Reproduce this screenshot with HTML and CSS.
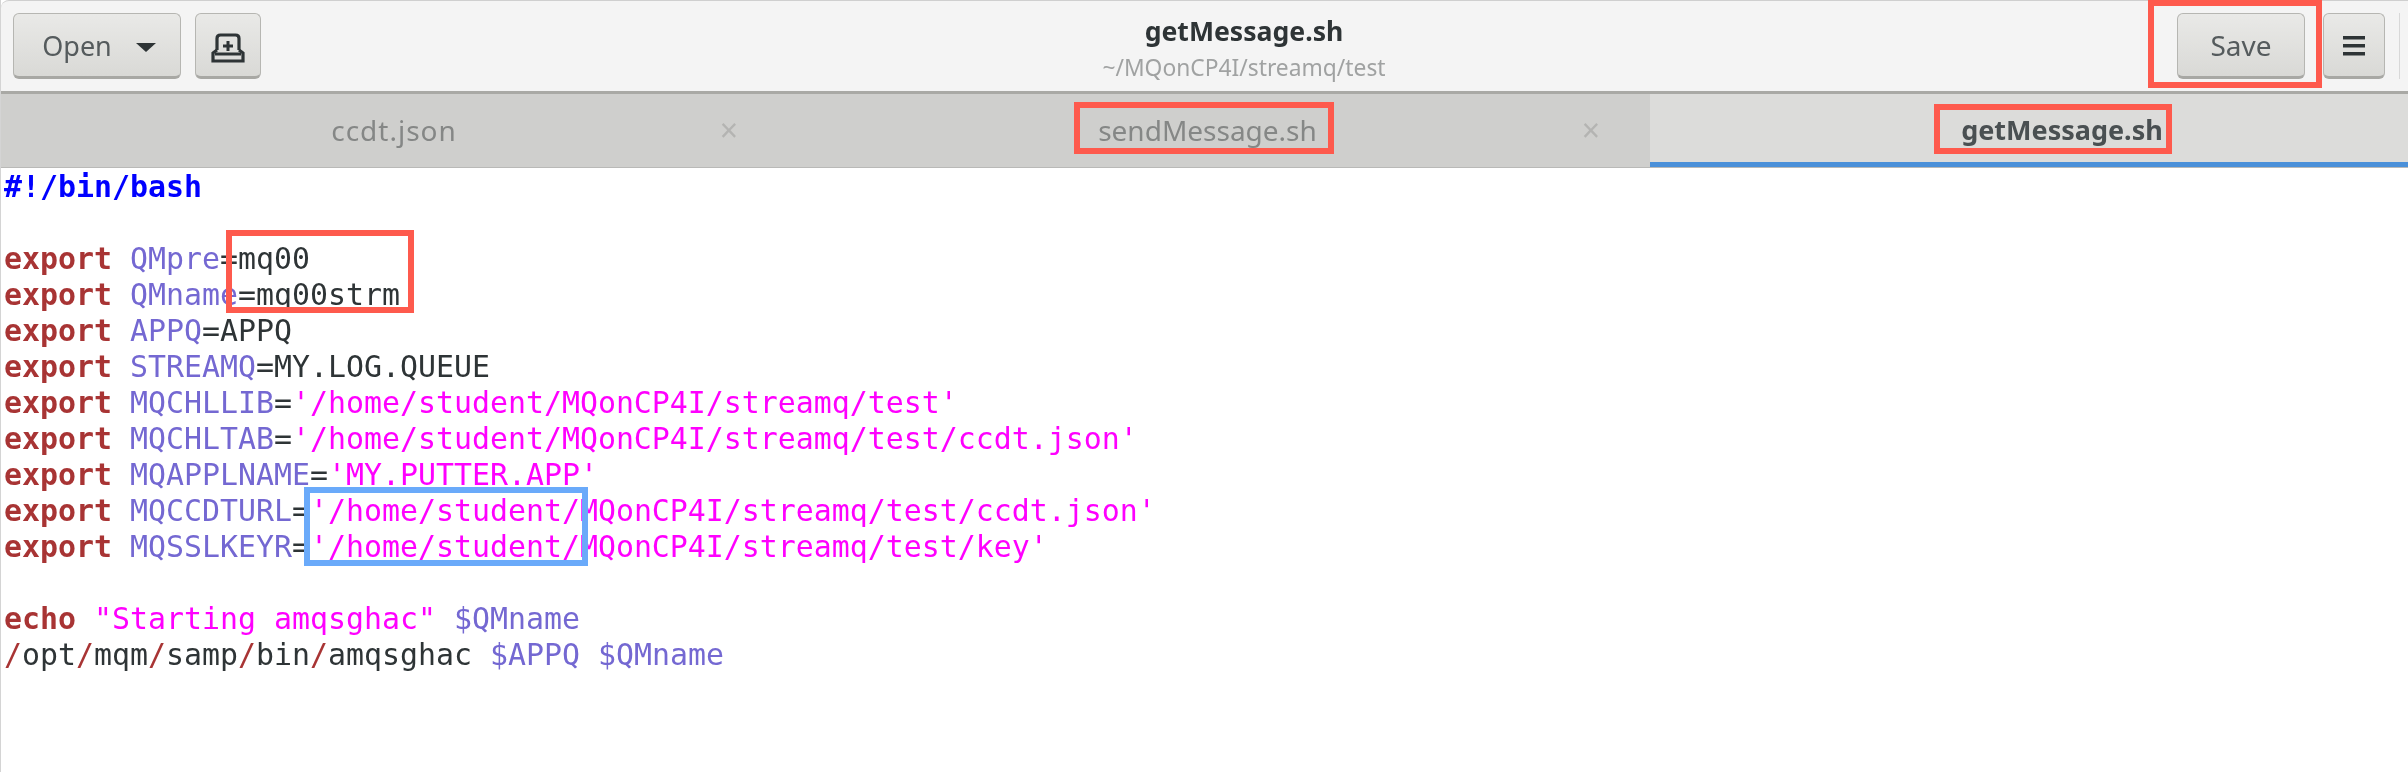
FILE: index.html
```html
<!DOCTYPE html>
<html lang="en">
<head>
<meta charset="utf-8">
<title>getMessage.sh</title>
<link rel="stylesheet" href="styles.css">
</head>
<body>
<div class="window">
  <header class="headerbar">
    <div class="group group-left">
      <button class="btn btn-open"><span>Open</span><i class="caret"></i></button>
      <button class="btn btn-icon btn-recent">
        <svg width="34" height="30" viewBox="0 0 34 30" fill="none" stroke="#2e3436" stroke-width="3.2">
          <path d="M6 17V5.500Q6 2 9.500 2H24.500Q28 2 28 5.500V17"/>
          <path d="M6 17L2 20V28H32V20L28 17"/>
          <path d="M4 21H30" stroke-width="3"/>
          <path d="M17 8V18M12 13H22" stroke-width="3"/>
        </svg>
      </button>
    </div>
    <div class="title">
      <div class="title-main">getMessage.sh</div>
      <div class="title-sub">~/MQonCP4I/streamq/test</div>
    </div>
    <div class="group group-right">
      <button class="btn btn-save">Save</button>
      <button class="btn btn-icon btn-menu">
        <svg width="22" height="20" viewBox="0 0 22 20" fill="#2e3436"><rect y="0" width="22" height="3.500"/><rect y="8" width="22" height="3.500"/><rect y="16" width="22" height="3.500"/></svg>
      </button>
      <div class="sep"></div>
    </div>
  </header>
  <nav class="tabs">
    <div class="tab tab-1"><span class="tab-label">ccdt.json</span><span class="tab-close">×</span></div>
    <div class="tab tab-2"><span class="tab-label">sendMessage.sh</span><span class="tab-close">×</span></div>
    <div class="tab tab-3 active"><span class="tab-label">getMessage.sh</span></div>
  </nav>
  <pre class="editor"><span class="sb">#!/bin/bash</span>

<span class="kw">export</span> <span class="var">QMpre</span>=mq00
<span class="kw">export</span> <span class="var">QMname</span>=mq00strm
<span class="kw">export</span> <span class="var">APPQ</span>=APPQ
<span class="kw">export</span> <span class="var">STREAMQ</span>=MY.LOG.QUEUE
<span class="kw">export</span> <span class="var">MQCHLLIB</span>=<span class="str">'/home/student/MQonCP4I/streamq/test'</span>
<span class="kw">export</span> <span class="var">MQCHLTAB</span>=<span class="str">'/home/student/MQonCP4I/streamq/test/ccdt.json'</span>
<span class="kw">export</span> <span class="var">MQAPPLNAME</span>=<span class="str">'MY.PUTTER.APP'</span>
<span class="kw">export</span> <span class="var">MQCCDTURL</span>=<span class="str">'/home/student/MQonCP4I/streamq/test/ccdt.json'</span>
<span class="kw">export</span> <span class="var">MQSSLKEYR</span>=<span class="str">'/home/student/MQonCP4I/streamq/test/key'</span>

<span class="kw">echo</span> <span class="str">"Starting amqsghac"</span> <span class="var">$QMname</span>
<span class="sl">/</span>opt<span class="sl">/</span>mqm<span class="sl">/</span>samp<span class="sl">/</span>bin<span class="sl">/</span>amqsghac <span class="var">$APPQ</span> <span class="var">$QMname</span></pre>
  <div class="mark mark-save"></div>
  <div class="mark mark-send"></div>
  <div class="mark mark-get"></div>
  <div class="mark mark-vars"></div>
  <div class="mark mark-path"></div>
</div>
</body>
</html>
```
FILE: styles.css
```css
* { box-sizing: border-box; }
html, body { margin: 0; padding: 0; background: #fff; }
.window {
  position: relative;
  width: 2408px;
  height: 772px;
  overflow: hidden;
  font-family: "Noto Sans", sans-serif;
  border-left: 1px solid #d4d4d4;
}
.headerbar {
  display: flex;
  align-items: flex-start;
  height: 94px;
  padding: 12px 8px 0 12px;
  background: #f4f4f4;
  border-top: 1px solid #cfcfcf;
  border-bottom: 3px solid #a9a9a5;
  border-top-left-radius: 8px;
  filter: blur(.7px);
}
.group { display: flex; align-items: flex-start; }
.group-left { gap: 14px; }
.group-right { gap: 18px; }
.btn {
  display: flex;
  align-items: center;
  justify-content: center;
  height: 66px;
  padding: 0;
  font: 27px "Noto Sans", sans-serif;
  color: #555b5d;
  background: linear-gradient(#e9e9e7, #d9d9d6);
  border: 1px solid #b6b6b2;
  border-bottom: 3px solid #a8a8a4;
  border-radius: 6px;
}
.btn-open { width: 168px; gap: 24px; padding-left: 4px; }
.caret {
  width: 0;
  height: 0;
  border-left: 10px solid transparent;
  border-right: 10px solid transparent;
  border-top: 9px solid #2e3436;
  margin-top: 4px;
}
.btn-recent { width: 66px; padding-top: 6px; }
.btn-save { width: 128px; font-size: 28px; }
.btn-menu { width: 62px; padding-top: 2px; }
.sep { width: 1px; height: 66px; margin-left: -4px; background: #d8d8d8; }
.title {
  flex: 1;
  padding-left: 50px;
  text-align: center;
  line-height: 1;
}
.title-main { margin-top: 3px; font-size: 26.600px; font-weight: 700; color: #2e3436; line-height: 30px; }
.title-sub { margin-top: 8px; font-size: 22.800px; color: #a0a2a2; line-height: 28px; }
.tabs {
  display: flex;
  height: 74px;
  background: #cfcfcd;
  border-bottom: 1px solid #b9b9b7;
  filter: blur(.7px);
}
.tab {
  display: flex;
  align-items: center;
  height: 73px;
  padding-bottom: 2px;
  font-size: 28px;
  color: #858786;
}
.tab-label { flex: 1; text-align: center; }
.tab-1 { width: 803px; }
.tab-1 .tab-label { flex: none; width: 786px; letter-spacing: 1px; }
.tab-2 { width: 846px; }
.tab-2 .tab-label { flex: none; width: 807px; }
.tab-close { width: 40px; text-align: center; font-size: 32px; color: #b4b4b2; }
.tab-1 .tab-close { margin-left: -78px; }
.tab-2 .tab-close { margin-left: -40px; }
.tab-3 { width: 758px; padding: 3px 0 0 66px; background: #dcdcda; border-bottom: 5px solid #4a90d9; font-size: 27px; font-weight: 700; color: #4a5052; }
.editor {
  margin: 0;
  padding: 1px 0 0 3px;
  font: 29.900px/36px "DejaVu Sans Mono", monospace;
  color: #2e3436;
  filter: blur(.7px);
}
.kw { color: #a83434; font-weight: 700; }
.sb { color: #0000ff; font-weight: 700; }
.var { color: #7468d2; }
.str { color: #ff00ff; }
.sl { color: #a83434; }
.mark { position: absolute; border: 6px solid #fe5a4d; }
.mark-save { left: 2147px; top: 0; width: 174px; height: 88px; }
.mark-send { left: 1073px; top: 102px; width: 260px; height: 52px; }
.mark-get { left: 1933px; top: 104px; width: 238px; height: 50px; }
.mark-vars { left: 225px; top: 230px; width: 188px; height: 83px; }
.mark-path { left: 303px; top: 487px; width: 284px; height: 79px; border-color: #6aaafa; }
```
